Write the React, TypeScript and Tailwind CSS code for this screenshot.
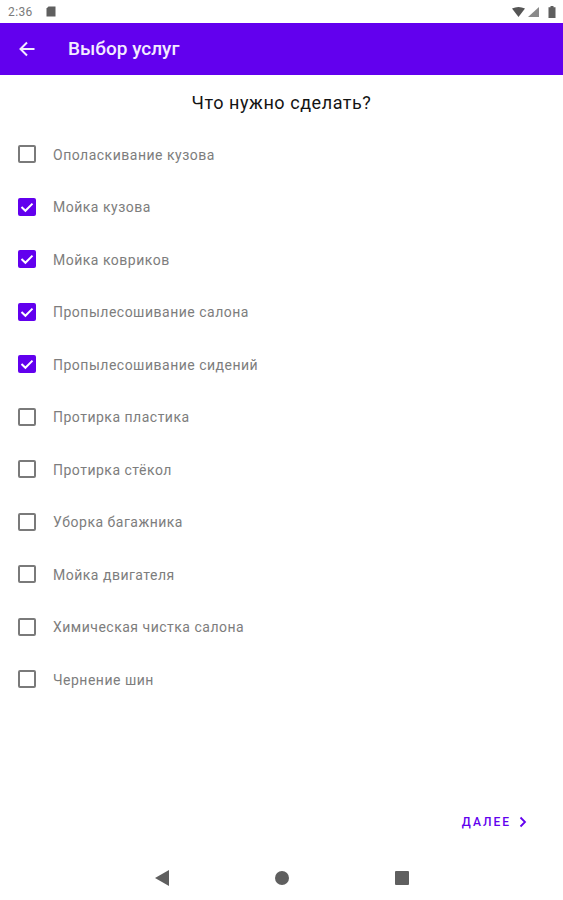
import React from 'react';

const services = [
  { name: 'Ополаскивание кузова', checked: false },
  { name: 'Мойка кузова', checked: true },
  { name: 'Мойка ковриков', checked: true },
  { name: 'Пропылесошивание салона', checked: true },
  { name: 'Пропылесошивание сидений', checked: true },
  { name: 'Протирка пластика', checked: false },
  { name: 'Протирка стёкол', checked: false },
  { name: 'Уборка багажника', checked: false },
  { name: 'Мойка двигателя', checked: false },
  { name: 'Химическая чистка салона', checked: false },
  { name: 'Чернение шин', checked: false },
];

const Checkbox: React.FC<{ checked: boolean }> = ({ checked }) =>
  checked ? (
    <div className="w-[18px] h-[18px] rounded-[2px] bg-[#6200ee] flex items-center justify-center shrink-0">
      <svg width="16" height="16" viewBox="0 0 16 16" fill="none">
        <path d="M2.5 8 L6.4 11.8 L13.5 4.6" stroke="white" strokeWidth="2" />
      </svg>
    </div>
  ) : (
    <div className="w-[18px] h-[18px] rounded-[2px] border-2 border-[#7a7a7a] shrink-0" />
  );

export default function App() {
  return (
    <div className="w-[563px] h-[900px] bg-white flex flex-col overflow-hidden font-['Roboto',sans-serif]">
      {/* status bar */}
      <div className="h-[23px] flex items-center justify-between pl-2 pr-[7px] shrink-0">
        <div className="flex items-center gap-[13px]">
          <span className="text-[12px] text-[#7a7a7a] tracking-[0.4px]">2:36</span>
          <svg width="10" height="11" viewBox="0 0 10 11">
            <path d="M2.5 0.5 H9.5 V10.5 H0.5 V2.5 Z" fill="#5f5f5f" />
          </svg>
        </div>
        <div className="flex items-center gap-[3px]">
          <svg width="13" height="10" viewBox="0 0 13 10">
            <path d="M0 1.5 Q6.5 -1.5 13 1.5 L6.5 10 Z" fill="#555555" />
          </svg>
          <svg width="11" height="10" viewBox="0 0 11 10" className="mr-[6px]">
            <path d="M11 0 V10 H0 Z" fill="#8a8a8a" />
          </svg>
          <svg width="8" height="12" viewBox="0 0 8 12">
            <path d="M2.5 0 H5.5 V1.2 H7.5 V12 H0.5 V1.2 H2.5 Z" fill="#5f5f5f" />
          </svg>
        </div>
      </div>

      {/* app bar */}
      <div className="h-[52px] bg-[#6200ee] flex items-center shrink-0 pl-[18px]">
        <svg width="18" height="18" viewBox="0 0 18 18" fill="none">
          <path d="M16.5 9 H2.5 M9 2.5 L2.5 9 L9 15.5" stroke="#f3ecff" strokeWidth="2" />
        </svg>
        <span className="ml-[32px] text-[19px] font-medium text-[#f3ecff]">Выбор услуг</span>
      </div>

      {/* title */}
      <div className="mt-[16px] h-[24px] flex items-center justify-center text-[18px] leading-none text-[#141414] tracking-[0.55px] shrink-0">
        Что нужно сделать?
      </div>

      {/* list */}
      <div className="mt-[13px] flex flex-col pl-[18px] shrink-0">
        {services.map((s) => (
          <div key={s.name} className="h-[52.5px] flex items-center gap-[17px]">
            <Checkbox checked={s.checked} />
            <span className="text-[14px] text-[#7d7d7d] tracking-[0.5px] translate-y-[1px]">{s.name}</span>
          </div>
        ))}
      </div>

      {/* next */}
      <div className="mt-[107px] flex justify-end items-center pr-[36px] gap-[8px] shrink-0">
        <span className="text-[12px] font-medium text-[#6200ee] tracking-[2px]">ДАЛЕЕ</span>
        <svg width="8" height="12" viewBox="0 0 8 12" fill="none">
          <path d="M1.5 1.5 L6 6 L1.5 10.5" stroke="#6200ee" strokeWidth="1.8" />
        </svg>
      </div>

      {/* nav bar */}
      <div className="mt-[39px] flex items-center justify-center gap-[106px] shrink-0">
        <svg width="14" height="16" viewBox="0 0 14 16">
          <path d="M14 0 V16 L0 8 Z" fill="#5f5f5f" />
        </svg>
        <div className="w-[14px] h-[14px] rounded-full bg-[#5f5f5f]" />
        <div className="w-[14px] h-[14px] rounded-[1px] bg-[#5f5f5f]" />
      </div>
    </div>
  );
}
